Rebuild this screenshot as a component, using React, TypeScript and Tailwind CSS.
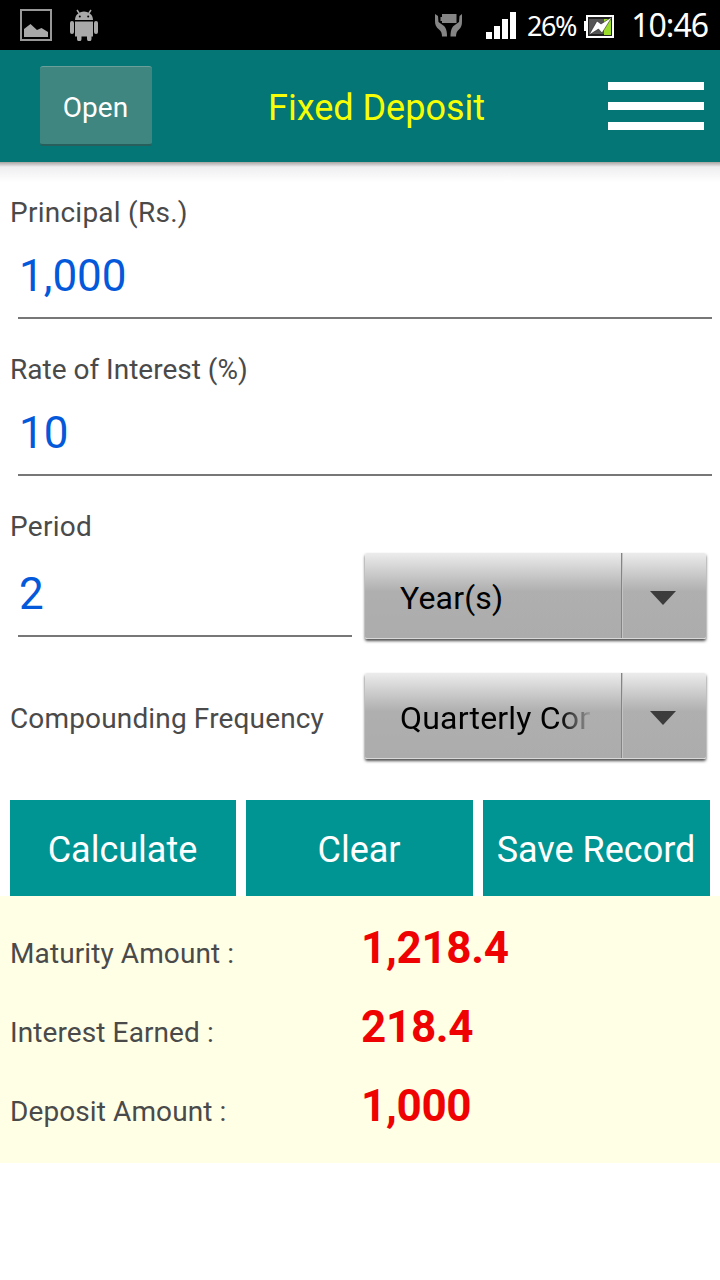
import clsx from 'clsx'

interface FieldProps {
  label: string
  value: string
  tight?: boolean
}

function Field({ label, value, tight }: FieldProps) {
  return (
    <div className="mb-8">
      <div className={clsx('h-9 pl-2.5 text-[28px] leading-[38px] text-[#4a4a4a]', tight ? 'tracking-[0px]' : 'tracking-[0.25px]')}>
        {label}
      </div>
      <div className="mt-4 ml-[18px] mr-2 h-[73px] border-b-2 border-[#777] pl-px text-[44px] leading-[60px] tracking-[0px] text-[#0459db]">
        {value}
      </div>
    </div>
  )
}

function Spinner({ label, faded }: { label: string; faded?: boolean }) {
  return (
    <div className="flex h-[86px] w-[341px] shrink-0 rounded-[2px] border-b border-[#d8d8d8] bg-linear-to-b from-[#ececec] via-[#afafaf] via-45% to-[#acacac] shadow-[0_2px_3px_rgba(0,0,0,0.7)]">
      <div className="flex w-[256px] items-center pt-1 pr-[31px] pl-[35px]">
        <span
          className={clsx(
            'w-full overflow-hidden text-[32px] leading-[44px] whitespace-nowrap text-black',
            faded ? 'mask-r-from-84% mask-r-to-102% tracking-[0.2px]' : 'tracking-[0.2px]',
          )}
        >
          {label}
        </span>
      </div>
      <div className="flex flex-1 items-center justify-center border-l border-[#848484] pt-[5px] pr-0.5 shadow-[inset_1px_0_0_#c4c4c4]">
        <svg width="26" height="14" viewBox="0 0 26 14">
          <path d="M0 0H26L13 14Z" fill="#3c3c3c" />
        </svg>
      </div>
    </div>
  )
}

function StatusBar() {
  return (
    <div className="flex h-[50px] items-center bg-black font-['Noto_Sans',sans-serif] text-white">
      <svg className="ml-5" width="32" height="32" viewBox="0 0 32 32" fill="#a9a9a9">
        <path d="M1 1H31V31H1Z" fill="none" stroke="#989898" strokeWidth="2" />
        <path d="M4 28V20L10.500 15L17 21L21.500 19L28 23V28Z" />
      </svg>
      <svg className="ml-[18px]" width="28" height="32" viewBox="0 0 28 32" fill="#a9a9a9">
        <path d="M7 1L9 4M21 1L19 4" stroke="#a9a9a9" strokeWidth="1.500" />
        <path d="M5 11C5 6 9 2.500 14 2.500S23 6 23 11Z" />
        <path d="M5 12.500H23V27.500H5Z" />
        <rect x="0" y="12" width="4" height="13" rx="2" />
        <rect x="24" y="12" width="4" height="13" rx="2" />
        <path d="M7 26H11.500V30A2 2 0 0 1 7 30ZM17 26H21.500V30A2 2 0 0 1 17 30Z" />
        <circle cx="9.800" cy="7.500" r="1" fill="#000" />
        <circle cx="18.200" cy="7.500" r="1" fill="#000" />
      </svg>
      <svg className="ml-auto" width="28" height="24" viewBox="0 0 28 24" fill="#858585">
        <path d="M7 1H21.500V10H7V8H5.500V4H7Z" />
        <path d="M0 1L3 3L3.500 9L9 13C11 15 12 18 12 23.500H7C7 20 6 18 4 16.500C1 14 0 12 0 8Z" />
        <path d="M27 1L24.500 3L24 9L18.500 13C16.500 15 15.500 18 15.500 23.500H21C21 20 22 18 24 16.500C26.500 14 27 12 27 8Z" />
      </svg>
      <svg className="ml-[23px]" width="30" height="27" viewBox="0 0 30 27" fill="#fff">
        <path d="M0 20H6V27H0ZM8 14H14V27H8ZM16 7H22V27H16ZM24 0H30V27H24Z" />
      </svg>
      <span className="ml-[11px] w-[49px] pt-0.5 text-[27px] leading-[50px] tracking-[-1.5px] whitespace-nowrap">26%</span>
      <svg className="mt-1 ml-2" width="30" height="24" viewBox="0 0 30 24">
        <path d="M3 1H29V22H3Z" fill="#222" stroke="#fff" strokeWidth="2" />
        <path d="M0 6H3V16H0Z" fill="#fff" />
        <path d="M5 4H20V19H5Z" fill="#555" />
        <path d="M20 4H27V20H20Z" fill="#9bdc2b" />
        <path d="M5 20L13 6L17 9L28 2L18 18L14.500 14Z" fill="#fff" stroke="#111" strokeWidth="0.500" />
      </svg>
      <span className="mr-3 ml-3.5 w-20 text-right text-[32px] leading-[50px] tracking-[-1px] whitespace-nowrap">
        10:46
      </span>
    </div>
  )
}

const actions = ['Calculate', 'Clear', 'Save Record']

const results = [
  { label: 'Maturity Amount :', value: '1,218.4' },
  { label: 'Interest Earned :', value: '218.4' },
  { label: 'Deposit Amount :', value: '1,000' },
]

export default function App() {
  return (
    <div className="h-[1280px] w-[720px] overflow-hidden bg-white font-[Roboto,sans-serif]">
      <StatusBar />

      <header className="flex h-28 items-center bg-[#037675]">
        <button className="ml-10 h-20 w-28 rounded-[3px] border-t border-b-2 border-t-[#6a9f9b] border-b-[#285f5d] bg-[#3f8580] pt-[5px] pr-px text-[28px] text-white">
          Open
        </button>
        <h1 className="ml-[116px] pt-1 text-[36px] leading-[44px] whitespace-nowrap text-[#f6ff05]">Fixed Deposit</h1>
        <div className="mr-4 ml-auto flex w-24 flex-col gap-3">
          <span className="h-2 bg-white" />
          <span className="h-2 bg-white" />
          <span className="h-2 bg-white" />
        </div>
      </header>
      <div className="h-5 bg-linear-to-b from-[#a9a4a4] via-[#eeeef0] via-25% to-white" />

      <main className="pt-3">
        <Field label="Principal (Rs.)" value="1,000" />
        <Field label="Rate of Interest (%)" value="10" tight />

        <div className="h-9 pl-2.5 text-[28px] leading-[38px] tracking-[0.3px] text-[#4a4a4a]">Period</div>
        <div className="mt-2 flex h-[88px]">
          <div className="mt-[11px] mr-[13px] ml-[18px] h-[74px] flex-1 border-b-2 border-[#777] pl-px text-[44px] leading-[62px] text-[#0459db]">
            2
          </div>
          <div className="mt-px mr-3.5">
            <Spinner label="Year(s)" />
          </div>
        </div>
        <div className="mt-[33px] flex h-[87px] items-start">
          <div className="w-[365px] pt-[28px] pl-2.5 text-[28px] leading-9 tracking-[0.15px] text-[#4a4a4a]">Compounding Frequency</div>
          <Spinner label="Quarterly Compounding" faded />
        </div>

        <div className="mt-10 grid grid-cols-[226px_227px_227px] gap-2.5 px-2.5">
          {actions.map((action) => (
            <button key={action} className="h-24 bg-[#009592] pt-1 pr-px text-[36px] whitespace-nowrap text-white">
              {action}
            </button>
          ))}
        </div>

        <section className="h-[267px] bg-[#ffffe6] pt-[13px]">
          {results.map((r) => (
            <div key={r.label} className="flex h-[79px] items-center">
              <span className="w-[361px] pt-2.5 pl-2.5 text-[28px] leading-9 tracking-[0.1px] text-[#4a4a4a]">{r.label}</span>
              <span className="pb-0.5 text-[44px] leading-[52px] font-bold tracking-[-0.3px] text-[#ee0202]">{r.value}</span>
            </div>
          ))}
        </section>
      </main>
    </div>
  )
}
